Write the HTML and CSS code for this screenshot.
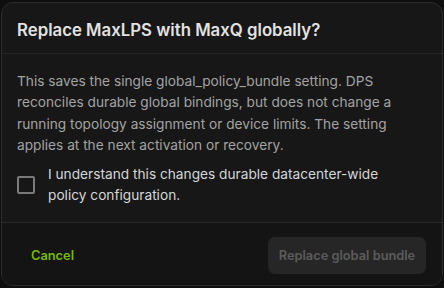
FILE: index.html
```html
<!DOCTYPE html>
<html>
<head>
<meta charset="utf-8">
<link rel="stylesheet" href="styles.css">
</head>
<body>
<div class="backdrop">
  <div class="dialog">
    <div class="header">
      <h2 class="title">Replace MaxLPS with MaxQ globally?</h2>
    </div>
    <div class="content">
      <p class="desc">This saves the single global_policy_bundle setting. DPS reconciles durable global bindings, but does not change a running topology assignment or device limits. The setting applies at the next activation or recovery.</p>
      <label class="check">
        <span class="box"></span>
        <span class="check-label">I understand this changes durable datacenter-wide policy configuration.</span>
      </label>
    </div>
    <div class="footer">
      <button class="btn-cancel">Cancel</button>
      <button class="btn-primary" disabled>Replace global bundle</button>
    </div>
  </div>
</div>
</body>
</html>
```

FILE: styles.css
```css
html, body {
  margin: 0;
  padding: 0;
  background: #0e0e0e;
  width: 444px;
  height: 288px;
  overflow: hidden;
  font-family: Inter, "Noto Sans", "Liberation Sans", sans-serif;
}
.backdrop {
  padding: 2px 1px;
  box-sizing: border-box;
  height: 288px;
}
.dialog {
  box-sizing: border-box;
  width: 442px;
  height: 284px;
  background: #171717;
  border: 1px solid #2c2c2c;
  border-radius: 12px;
  display: flex;
  flex-direction: column;
  overflow: hidden;
}
.header {
  height: 51px;
  border-bottom: 1px solid #262626;
  display: flex;
  align-items: center;
  padding: 0 15px;
  box-sizing: border-box;
}
.title {
  margin: 0;
  font-size: 16.8px;
  font-weight: 600;
  color: #e2e2e2;
  padding-top: 3px;
}
.content {
  padding: 17px 15px 0 15px;
  height: 169px;
  box-sizing: border-box;
  border-bottom: 1px solid #262626;
}
.desc {
  margin: 0;
  font-size: 13.7px;
  line-height: 21.3px;
  color: #a3a3a3;
}
.check {
  display: flex;
  align-items: center;
  gap: 13px;
  margin-top: 8px;
  padding-right: 30px;
}
.box {
  width: 18px;
  height: 18px;
  box-sizing: border-box;
  border: 2px solid #7a7a7a;
  border-radius: 2px;
  flex: none;
}
.check-label {
  font-size: 13.7px;
  line-height: 21.3px;
  color: #d6d6d6;
}
.footer {
  flex: 1;
  display: flex;
  align-items: center;
  justify-content: space-between;
  padding: 0 16px 0 13px;
  background: #141414;
}
.btn-cancel {
  background: none;
  border: none;
  font-family: inherit;
  font-size: 12.8px;
  font-weight: 600;
  color: #76b900;
  padding: 8px 16px;
  margin-top: 2px;
}
.btn-primary {
  font-family: inherit;
  font-size: 12.8px;
  font-weight: 600;
  color: #5c5c5c;
  background: #262626;
  border: none;
  border-radius: 7px;
  width: 158px;
  height: 37px;
  margin-top: 2px;
}
```
